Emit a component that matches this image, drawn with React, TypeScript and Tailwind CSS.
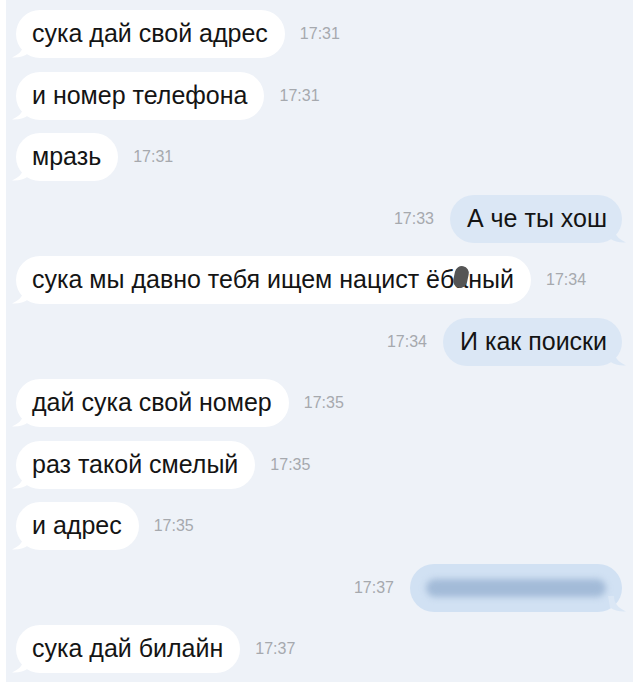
import React from "react";

type Msg = {
  text: React.ReactNode;
  time: string;
  out?: boolean;
  blurred?: boolean;
};

const Tail = ({ out }: { out?: boolean }) => (
  <svg
    width="20"
    height="16"
    viewBox="0 0 20 16"
    className={
      out
        ? "absolute -right-[6px] bottom-0 -scale-x-100"
        : "absolute -left-[6px] bottom-0"
    }
  >
    <path
      d="M14 0 C14 7 10 12 2 15.5 C8 16 14 14.5 18 11.5 L20 0 Z"
      fill={out ? "#dbe7f5" : "#ffffff"}
    />
  </svg>
);

const Bubble = ({ m }: { m: Msg }) => {
  if (m.blurred) {
    return (
      <div className="relative h-[48px] w-[212px] rounded-[24px] bg-[#d1e1f3] flex items-center px-4">
        <Tail out />
        <div className="h-[18px] w-full rounded-full bg-[#a3bbd8] blur-[3px]" />
      </div>
    );
  }
  return (
    <div
      className={
        "relative h-[48px] flex items-center rounded-[24px] text-[25px] text-[#141414] " +
        (m.out ? "bg-[#dbe7f5] pl-[17px] pr-[15px]" : "bg-white pl-[16px] pr-[17px]")
      }
    >
      <Tail out={m.out} />
      <span className="relative">{m.text}</span>
    </div>
  );
};

const Censored = () => (
  <span className="relative inline-block">
    а
    <span className="absolute left-[0px] top-[5px] h-[22px] w-[14px] rotate-12 rounded-full bg-[#555555]" />
  </span>
);

const messages: Msg[] = [
  { text: "сука дай свой адрес", time: "17:31" },
  { text: "и номер телефона", time: "17:31" },
  { text: "мразь", time: "17:31" },
  { text: "А че ты хош", time: "17:33", out: true },
  {
    text: (
      <>
        сука мы давно тебя ищем нацист ёб
        <Censored />
        ный
      </>
    ),
    time: "17:34",
  },
  { text: "И как поиски", time: "17:34", out: true },
  { text: "дай сука свой номер", time: "17:35" },
  { text: "раз такой смелый", time: "17:35" },
  { text: "и адрес", time: "17:35" },
  { text: "", time: "17:37", out: true, blurred: true },
  { text: "сука дай билайн", time: "17:37" },
];

export default function App() {
  return (
    <div
      className="h-[682px] w-[640px] bg-white pl-[6px] pr-[7px] overflow-hidden"
      style={{ fontFamily: '"Liberation Sans", Arial, sans-serif' }}
    >
      <div className="h-full bg-[#eef2f8] pt-[10px] pl-[10px] pr-[11px] flex flex-col gap-[13.5px]">
        {messages.map((m, i) => (
          <div
            key={i}
            className={
              "flex items-center " +
              (m.out ? "justify-end gap-[16px]" : "justify-start gap-[15px]")
            }
          >
            {m.out && (
              <span className="text-[16px] text-[#a6a9ae]">{m.time}</span>
            )}
            <Bubble m={m} />
            {!m.out && (
              <span className="text-[16px] text-[#a6a9ae]">{m.time}</span>
            )}
          </div>
        ))}
      </div>
    </div>
  );
}
